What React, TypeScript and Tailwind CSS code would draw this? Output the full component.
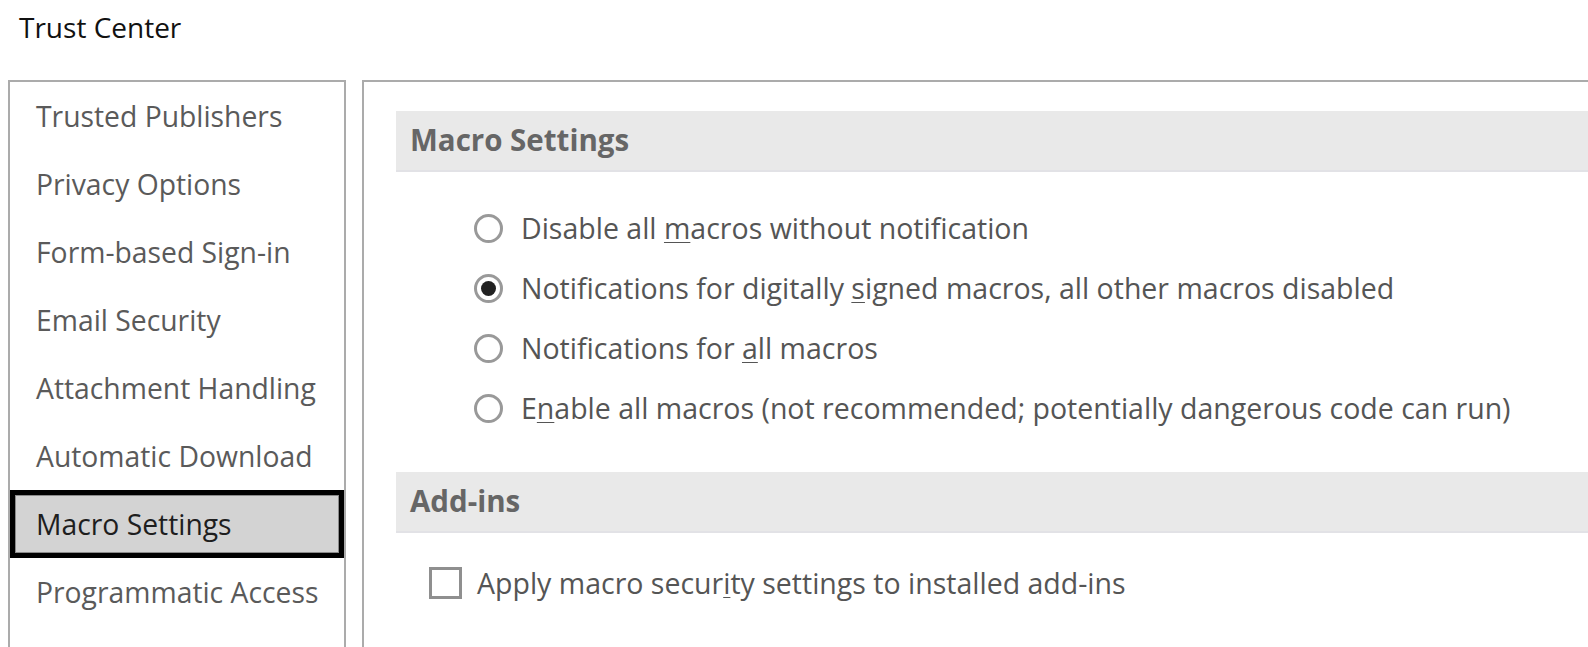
import React from 'react';

const navItems = [
  'Trusted Publishers',
  'Privacy Options',
  'Form-based Sign-in',
  'Email Security',
  'Attachment Handling',
  'Automatic Download',
  'Macro Settings',
  'Programmatic Access',
];

const font = { fontFamily: '"Open Sans", "Noto Sans", sans-serif' };

function Radio({ checked }: { checked?: boolean }) {
  return (
    <span className="flex h-[29px] w-[29px] shrink-0 items-center justify-center rounded-full border-[3px] border-[#999999] bg-white">
      {checked && <span className="h-[15px] w-[15px] rounded-full bg-[#222222]" />}
    </span>
  );
}

function SectionHeader({ title }: { title: string }) {
  return (
    <div className="flex h-[61px] items-center border-b-2 border-[#e2e2e6] bg-[#e9e9e9] pl-[14px]">
      <span className="text-[29.5px] font-bold text-[#666666]">{title}</span>
    </div>
  );
}

export default function App() {
  const options: { pre: string; u: string; post: string; checked?: boolean }[] = [
    { pre: 'Disable all ', u: 'm', post: 'acros without notification' },
    { pre: 'Notifications for digitally ', u: 's', post: 'igned macros, all other macros disabled', checked: true },
    { pre: 'Notifications for ', u: 'a', post: 'll macros' },
    { pre: 'E', u: 'n', post: 'able all macros (not recommended; potentially dangerous code can run)' },
  ];

  return (
    <div className="h-[647px] w-[1588px] overflow-hidden bg-white" style={font}>
      <div className="h-[80px] pl-[19px] pt-[6px] text-[28px] text-[#111111]">Trust Center</div>

      <div className="flex gap-[16px] pl-[8px]">
        {/* left nav */}
        <div className="h-[600px] w-[338px] shrink-0 border-2 border-[#ababab]">
          {navItems.map((item) => {
            const active = item === 'Macro Settings';
            return (
              <div
                key={item}
                className={
                  active
                    ? 'flex h-[68px] items-center border-[5px] border-black bg-[#d3d3d3] pl-[21px] text-[28.3px] text-[#1e1e1e] shadow-[inset_0_0_0_1px_#8a8a8a]'
                    : 'flex h-[68px] items-center pl-[26px] text-[28.3px] text-[#5a5a5a]'
                }
              >
                {item}
              </div>
            );
          })}
        </div>

        {/* right content */}
        <div className="h-[600px] flex-1 border-l-2 border-t-2 border-[#ababab] pl-[32px] pt-[29px]">
          <SectionHeader title="Macro Settings" />

          <div className="pl-[78px] pt-[26px]">
            {options.map((o, i) => (
              <div key={i} className="flex h-[60px] items-center gap-[18px] text-[28.5px] text-[#555555]">
                <Radio checked={o.checked} />
                <span>
                  {o.pre}
                  <span className="underline decoration-1 underline-offset-[3px]">{o.u}</span>
                  {o.post}
                </span>
              </div>
            ))}
          </div>

          <div className="mt-[34px]">
            <SectionHeader title="Add-ins" />
          </div>

          <div className="flex items-center gap-[15px] pl-[33px] pt-[29px] text-[28.5px] text-[#555555]">
            <span className="h-[32px] w-[33px] shrink-0 border-[3px] border-[#8f8f8f] bg-white" />
            <span>
              Apply macro secur<span className="underline decoration-1 underline-offset-[3px]">i</span>ty settings to installed add-ins
            </span>
          </div>
        </div>
      </div>
    </div>
  );
}
